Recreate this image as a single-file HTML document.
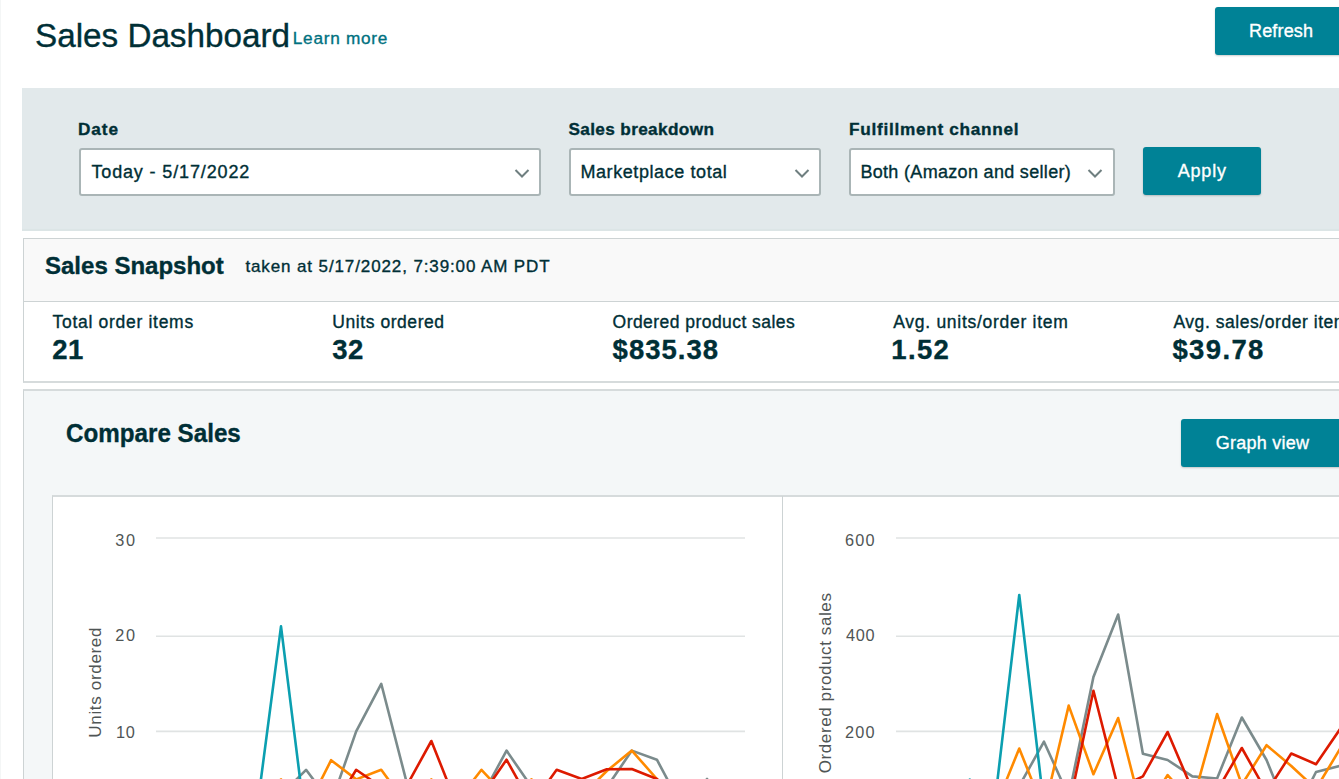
<!DOCTYPE html>
<html><head><meta charset="utf-8">
<style>
html,body{margin:0;padding:0;background:#fff;width:1339px;height:779px;overflow:hidden;position:relative;font-family:"Liberation Sans",sans-serif;color:#002f36;}
.a{position:absolute;}
.t{position:absolute;white-space:nowrap;line-height:1.117;-webkit-text-stroke:0.35px currentColor;}
.btn{position:absolute;background:#008296;border-radius:3px;box-shadow:0 1px 2px rgba(0,0,0,.2);}
.sel{position:absolute;background:#fff;border:2px solid #aab5b6;border-radius:3px;box-sizing:border-box;}
.chev{position:absolute;}
</style></head><body>
<div class="a" style="left:0;top:0;width:1px;height:779px;background:#f4f6f6;"></div>
<!-- header -->
<div class="btn" style="left:1215px;top:7px;width:140px;height:48px;"></div>

<!-- filter panel -->
<div class="a" style="left:22px;top:88px;width:1330px;height:143px;background:#e2e9eb;box-shadow:inset 0 -2px 1px #dce5e6;"></div>
<div class="sel" style="left:79px;top:148px;width:462px;height:48px;"></div>
<svg class="chev" style="left:513.5px;top:168px" width="16" height="11"><path d="M1.5 2 L8 8.5 L14.5 2" fill="none" stroke="#6f7f80" stroke-width="2"/></svg>
<div class="sel" style="left:569px;top:148px;width:252px;height:48px;"></div>
<svg class="chev" style="left:793.5px;top:168px" width="16" height="11"><path d="M1.5 2 L8 8.5 L14.5 2" fill="none" stroke="#6f7f80" stroke-width="2"/></svg>
<div class="sel" style="left:849px;top:148px;width:266px;height:48px;"></div>
<svg class="chev" style="left:1086.5px;top:168px" width="16" height="11"><path d="M1.5 2 L8 8.5 L14.5 2" fill="none" stroke="#6f7f80" stroke-width="2"/></svg>
<div class="btn" style="left:1143px;top:147px;width:118px;height:48px;"></div>

<!-- snapshot -->
<div class="a" style="left:23px;top:238px;width:1330px;height:145px;border:1px solid #cdd3d4;border-bottom:2px solid #d6dbdc;box-sizing:border-box;background:#fff;"></div>
<div class="a" style="left:24px;top:239px;width:1330px;height:62px;background:#f9f9f9;border-bottom:1px solid #cdd3d4;"></div>

<!-- compare sales -->
<div class="a" style="left:23px;top:389px;width:1330px;height:400px;border:1px solid #cdd3d4;border-top:2px solid #d6dbdc;box-sizing:border-box;background:#f4f7f8;"></div>
<div class="btn" style="left:1181px;top:419px;width:170px;height:48px;"></div>
<div class="a" style="left:52px;top:495px;width:1300px;height:300px;border-top:2px solid #d6dbdc;border-left:1px solid #cdd3d4;background:#fff;box-sizing:border-box;"></div>
<div class="a" style="left:782px;top:496px;width:1px;height:300px;background:#cdd3d4;"></div>

<svg class="a" style="left:0;top:0" width="1339" height="779">
<line x1="156" y1="538" x2="745" y2="538" stroke="#e0e3e3" stroke-width="1.6"/>
<line x1="896" y1="538" x2="1339" y2="538" stroke="#e0e3e3" stroke-width="1.6"/>
<line x1="156" y1="636.2" x2="745" y2="636.2" stroke="#e0e3e3" stroke-width="1.6"/>
<line x1="896" y1="636.2" x2="1339" y2="636.2" stroke="#e0e3e3" stroke-width="1.6"/>
<line x1="156" y1="731.4" x2="745" y2="731.4" stroke="#e0e3e3" stroke-width="1.6"/>
<line x1="896" y1="731.4" x2="1339" y2="731.4" stroke="#e0e3e3" stroke-width="1.6"/>
<polyline points="255.94,815.00 281.00,795.00 306.06,769.80 331.12,803.00 356.18,731.40 381.24,683.80 406.30,781.00 431.36,812.00 456.42,812.00 481.48,797.00 506.54,750.60 531.60,787.00 556.66,805.00 581.72,805.00 606.78,787.30 631.84,750.60 656.90,759.70 681.96,806.80 707.02,779.00 732.08,810.00" fill="none" stroke="#7b8b8c" stroke-width="2.6" stroke-linejoin="round"/>
<polyline points="994.52,815.00 1019.25,786.00 1043.98,741.70 1068.71,796.50 1093.44,677.00 1118.17,614.50 1142.90,753.80 1167.63,760.00 1192.36,776.40 1217.09,778.50 1241.82,717.50 1266.55,760.00 1291.28,821.00 1316.01,772.00 1340.74,765.70" fill="none" stroke="#7b8b8c" stroke-width="2.6" stroke-linejoin="round"/>
<polyline points="230.88,815.00 255.94,800.00 281.00,779.40 306.06,809.70 331.12,760.20 356.18,779.40 381.24,769.80 406.30,803.90 431.36,779.40 456.42,802.00 481.48,769.80 506.54,796.70 531.60,779.40 556.66,800.00 581.72,796.00 606.78,771.00 631.84,750.60 656.90,779.00 681.96,810.00" fill="none" stroke="#ff8a00" stroke-width="2.6" stroke-linejoin="round"/>
<polyline points="969.79,815.00 994.52,809.50 1019.25,748.50 1043.98,810.50 1068.71,705.60 1093.44,774.20 1118.17,718.00 1142.90,815.00 1167.63,775.00 1192.36,803.00 1217.09,714.00 1241.82,784.70 1266.55,745.20 1291.28,766.00 1316.01,788.90 1340.74,747.70" fill="none" stroke="#ff8a00" stroke-width="2.6" stroke-linejoin="round"/>
<polyline points="306.06,815.00 331.12,811.00 356.18,769.80 381.24,787.00 406.30,786.50 431.36,741.00 456.42,804.00 481.48,796.00 506.54,759.70 531.60,804.60 556.66,769.80 581.72,779.00 606.78,769.20 631.84,769.00 656.90,779.00 681.96,800.00" fill="none" stroke="#dd1a00" stroke-width="2.6" stroke-linejoin="round"/>
<polyline points="1043.98,815.00 1068.71,808.00 1093.44,690.70 1118.17,788.00 1142.90,776.40 1167.63,732.00 1192.36,790.00 1217.09,790.80 1241.82,748.00 1266.55,792.00 1291.28,753.50 1316.01,764.20 1340.74,728.10" fill="none" stroke="#dd1a00" stroke-width="2.6" stroke-linejoin="round"/>
<polyline points="230.88,830.00 255.94,817.50 281.00,626.40 306.06,827.00 331.12,827.00" fill="none" stroke="#0b9fb0" stroke-width="2.6" stroke-linejoin="round"/>
<polyline points="945.06,815.00 969.79,779.60 994.52,805.30 1019.25,595.00 1043.98,806.50 1068.71,815.00" fill="none" stroke="#0b9fb0" stroke-width="2.6" stroke-linejoin="round"/>
</svg>
<div class="t" style="left:0;top:0;transform-origin:0 0;transform:translate(85.6px,737.7px) rotate(-90deg);font-size:17px;letter-spacing:0.675px;color:#4f5555;-webkit-text-stroke:0;line-height:1.117">Units ordered</div>
<div class="t" style="left:0;top:0;transform-origin:0 0;transform:translate(815.7px,773.3px) rotate(-90deg);font-size:17px;letter-spacing:0.6px;color:#4f5555;-webkit-text-stroke:0;line-height:1.117">Ordered product sales</div>

<div class="t" id="title" style="left:35.00px;top:16.68px;font-size:33.5px;color:#002f36;letter-spacing:0.000px;transform:scaleX(0.9921);transform-origin:2.00px 0;">Sales Dashboard</div>
<div class="t" id="learn" style="left:292.80px;top:28.93px;font-size:17.2px;color:#00717f;letter-spacing:0.733px;">Learn more</div>
<div class="t" id="refresh" style="left:1249.00px;top:20.71px;font-size:18px;color:#fff;letter-spacing:0.167px;">Refresh</div>
<div class="t" id="l_date" style="left:78.00px;top:119.73px;font-size:17.2px;font-weight:bold;color:#002f36;letter-spacing:0.933px;">Date</div>
<div class="t" id="l_sales" style="left:568.40px;top:119.73px;font-size:17.2px;font-weight:bold;color:#002f36;letter-spacing:0.364px;">Sales breakdown</div>
<div class="t" id="l_ful" style="left:849.00px;top:119.73px;font-size:17.2px;font-weight:bold;color:#002f36;letter-spacing:0.722px;">Fulfillment channel</div>
<div class="t" id="s_date" style="left:91.40px;top:161.61px;font-size:18px;color:#002f36;letter-spacing:0.863px;">Today - 5/17/2022</div>
<div class="t" id="s_sales" style="left:580.40px;top:161.61px;font-size:18px;color:#002f36;letter-spacing:0.588px;">Marketplace total</div>
<div class="t" id="s_ful" style="left:860.40px;top:161.61px;font-size:18px;color:#002f36;letter-spacing:0.317px;">Both (Amazon and seller)</div>
<div class="t" id="apply" style="left:1177.70px;top:160.71px;font-size:18px;color:#fff;letter-spacing:0.825px;">Apply</div>
<div class="t" id="snap" style="left:44.50px;top:251.71px;font-size:24.3px;font-weight:bold;color:#002f36;letter-spacing:0.000px;transform:scaleX(0.9878);transform-origin:1.00px 0;">Sales Snapshot</div>
<div class="t" id="taken" style="left:245.40px;top:257.12px;font-size:17px;color:#002f36;letter-spacing:0.885px;">taken at 5/17/2022, 7:39:00 AM PDT</div>
<div class="t" id="m1l" style="left:52.50px;top:312.66px;font-size:17.5px;color:#002f36;letter-spacing:0.706px;">Total order items</div>
<div class="t" id="m1v" style="left:52.20px;top:335.01px;font-size:27.5px;font-weight:bold;color:#002f36;letter-spacing:0.400px;">21</div>
<div class="t" id="m2l" style="left:332.30px;top:312.66px;font-size:17.5px;color:#002f36;letter-spacing:0.558px;">Units ordered</div>
<div class="t" id="m2v" style="left:332.30px;top:335.01px;font-size:27.5px;font-weight:bold;color:#002f36;letter-spacing:0.500px;">32</div>
<div class="t" id="m3l" style="left:612.60px;top:312.66px;font-size:17.5px;color:#002f36;letter-spacing:0.450px;">Ordered product sales</div>
<div class="t" id="m3v" style="left:612.60px;top:335.01px;font-size:27.5px;font-weight:bold;color:#002f36;letter-spacing:1.000px;">$835.38</div>
<div class="t" id="m4l" style="left:893.20px;top:312.66px;font-size:17.5px;color:#002f36;letter-spacing:0.725px;">Avg. units/order item</div>
<div class="t" id="m4v" style="left:891.20px;top:335.01px;font-size:27.5px;font-weight:bold;color:#002f36;letter-spacing:1.400px;">1.52</div>
<div class="t" id="m5l" style="left:1173.40px;top:312.66px;font-size:17.5px;color:#002f36;letter-spacing:0.550px;">Avg. sales/order item</div>
<div class="t" id="m5v" style="left:1172.40px;top:335.01px;font-size:27.5px;font-weight:bold;color:#002f36;letter-spacing:1.380px;">$39.78</div>
<div class="t" id="cmp" style="left:65.90px;top:418.94px;font-size:25.7px;font-weight:bold;color:#002f36;letter-spacing:0.000px;transform:scaleX(0.9413);transform-origin:1.00px 0;">Compare Sales</div>
<div class="t" id="graph" style="left:1215.80px;top:432.71px;font-size:18px;color:#fff;letter-spacing:0.244px;">Graph view</div>
<div class="t" id="y30" style="left:115.20px;top:531.25px;font-size:16.3px;color:#4f5555;letter-spacing:1.700px;-webkit-text-stroke:0;">30</div>
<div class="t" id="y20" style="left:115.20px;top:626.25px;font-size:16.3px;color:#4f5555;letter-spacing:1.700px;-webkit-text-stroke:0;">20</div>
<div class="t" id="y10" style="left:115.90px;top:722.85px;font-size:16.3px;color:#4f5555;letter-spacing:0.700px;-webkit-text-stroke:0;">10</div>
<div class="t" id="y600" style="left:845.00px;top:531.25px;font-size:16.3px;color:#4f5555;letter-spacing:1.250px;-webkit-text-stroke:0;">600</div>
<div class="t" id="y400" style="left:846.00px;top:626.25px;font-size:16.3px;color:#4f5555;letter-spacing:0.750px;-webkit-text-stroke:0;">400</div>
<div class="t" id="y200" style="left:845.00px;top:722.85px;font-size:16.3px;color:#4f5555;letter-spacing:1.250px;-webkit-text-stroke:0;">200</div>
</body></html>
